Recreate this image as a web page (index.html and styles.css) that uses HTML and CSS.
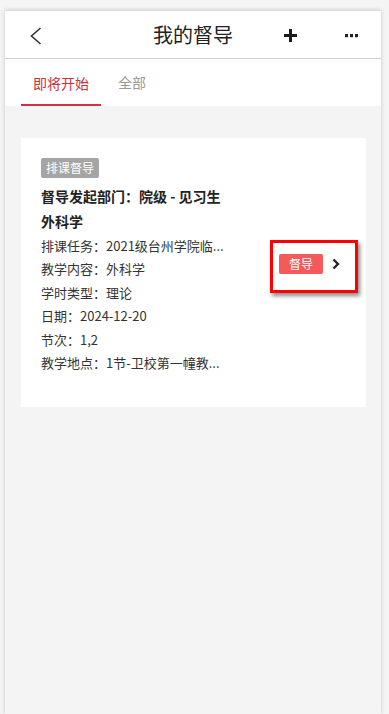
FILE: index.html
```html
<!DOCTYPE html>
<html lang="zh">
<head>
<meta charset="utf-8">
<title>我的督导</title>
<link rel="stylesheet" href="styles.css">
</head>
<body>
<div class="app">
  <header class="header">
    <div class="header-left">
      <svg class="icon-back" width="12" height="18" viewBox="0 0 12 18"><polyline points="10.5,1 1.5,9 10.5,17" fill="none" stroke="#333" stroke-width="1.6" stroke-linejoin="miter"/></svg>
    </div>
    <h1 class="title">我的督导</h1>
    <div class="header-right">
      <svg class="icon-plus" width="13" height="13" viewBox="0 0 13 13"><path d="M6.5 0v13M0 6.5h13" stroke="#1a1a1a" stroke-width="3"/></svg>
      <svg class="icon-more" width="13" height="4" viewBox="0 0 13 4"><rect x="0" y="0" width="3" height="3.2" fill="#222"/><rect x="5" y="0" width="3" height="3.2" fill="#222"/><rect x="10" y="0" width="3" height="3.2" fill="#222"/></svg>
    </div>
  </header>
  <nav class="tabs">
    <div class="tab tab-active">即将开始</div>
    <div class="tab">全部</div>
  </nav>
  <main class="content">
    <section class="card">
      <div class="info">
        <span class="tag">排课督导</span>
        <div class="card-title">督导发起部门：院级 - 见习生外科学</div>
        <div class="line">排课任务：2021级台州学院临...</div>
        <div class="line">教学内容：外科学</div>
        <div class="line">学时类型：理论</div>
        <div class="line">日期：2024-12-20</div>
        <div class="line">节次：1,2</div>
        <div class="line">教学地点：1节-卫校第一幢教...</div>
      </div>
      <div class="action">
        <span class="btn">督导</span>
        <svg class="chev" width="8" height="12" viewBox="0 0 8 12"><polyline points="1.5,1.5 6,6 1.5,10.5" fill="none" stroke="#222" stroke-width="2.4"/></svg>
      </div>
    </section>
  </main>
</div>
</body>
</html>
```

FILE: styles.css
```css
* { box-sizing: border-box; }
html, body { margin: 0; padding: 0; }
body {
  background: #f4f4f4;
  font-family: "Noto Sans CJK SC", "Noto Sans", sans-serif;
  color: #333;
  height: 714px;
  overflow: hidden;
}
.app {
  margin: 10px 0 0 5px;
  width: 376px;
  height: 704px;
  background: #f4f4f4;
  border-top: 1px solid #dcdcdc;
  box-shadow: 0 0 4px rgba(0,0,0,0.18);
  display: flex;
  flex-direction: column;
}
.header {
  height: 48px;
  background: #fff;
  border-bottom: 1px solid #cfcfcf;
  display: grid;
  grid-template-columns: 1fr auto 1fr;
  align-items: center;
}
.header-left { padding-left: 25px; display: flex; align-items: center; }
.icon-back { display: block; margin-top: 2px; }
.title {
  margin: 0;
  font-size: 20px;
  font-weight: 400;
  color: #222;
  line-height: 28px;
}
.header-right {
  display: flex;
  justify-content: flex-end;
  align-items: center;
  padding-right: 23px;
  gap: 48px;
}
.icon-plus { display: block; margin-top: 1px; }
.icon-more { display: block; margin-top: 2px; }
.tabs {
  height: 47px;
  background: #fff;
  display: flex;
  padding-left: 16px;
}
.tab {
  padding: 0 12px;
  font-size: 14px;
  color: #999;
  line-height: 47px;
  height: 47px;
}
.tab-active {
  color: #c9313d;
  width: 80px;
  border-bottom: 2px solid #cf3340;
  line-height: 48px;
}
.tab + .tab { margin-left: 5px; }
.content {
  flex: 1;
  padding: 32px 15px 0 16px;
}
.card {
  background: #fff;
  display: flex;
  align-items: center;
  padding: 20px 8px 33px 20px;
}
.info { width: 190px; }
.tag {
  display: block;
  width: max-content;
  background: #a5a5a5;
  color: #fff;
  font-size: 12px;
  line-height: 20px;
  height: 20px;
  padding: 0 5px;
  border-radius: 2px;
}
.card-title {
  margin-top: 6px;
  font-size: 14px;
  font-weight: 700;
  color: #222;
  line-height: 25px;
  width: 186px;
}
.line {
  font-size: 13px;
  line-height: 23.4px;
  white-space: nowrap;
  color: #333;
}
.action {
  margin-left: auto;
  width: 88px;
  height: 53px;
  border: 3px solid #f00;
  box-shadow: 2px 3px 4px rgba(0,0,0,0.45);
  display: flex;
  align-items: center;
  padding: 0 0 4px 6px;
}
.btn {
  display: inline-block;
  width: 44px;
  height: 20px;
  line-height: 20px;
  text-align: center;
  background: #f55a5a;
  color: #fff;
  font-size: 12px;
  border-radius: 2px;
}
.chev { display: block; margin-left: 9px; }
```
